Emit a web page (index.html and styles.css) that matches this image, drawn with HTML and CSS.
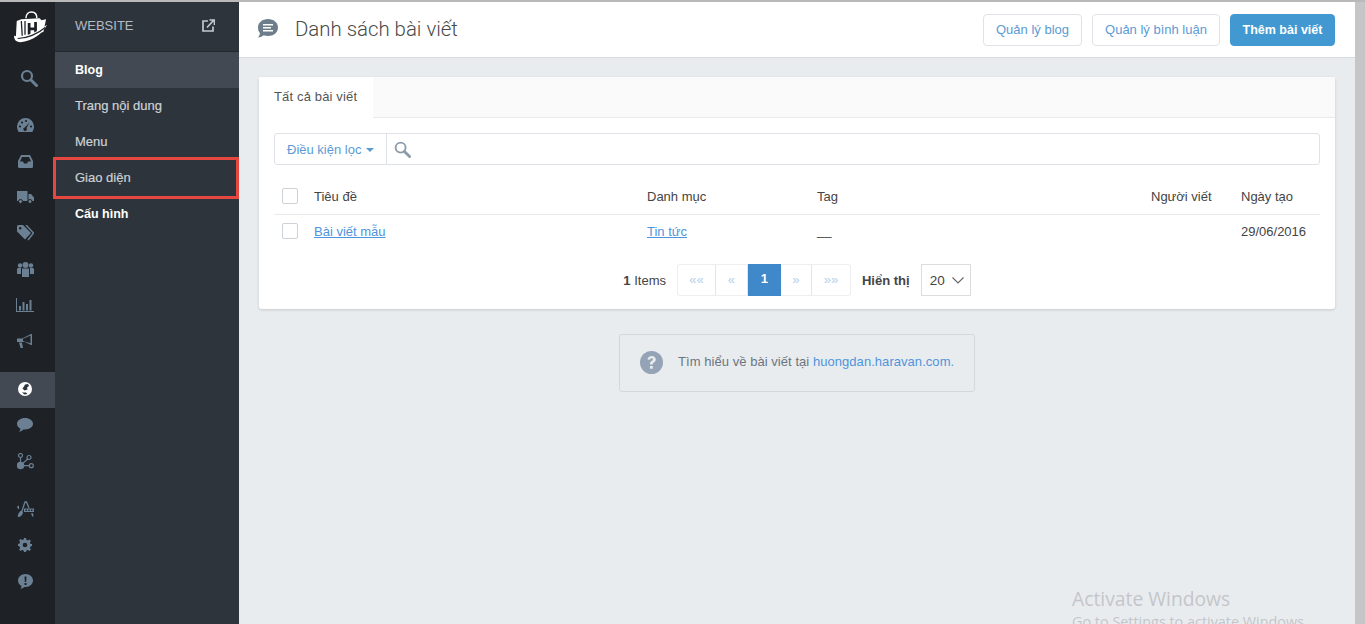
FILE: index.html
```html
<!DOCTYPE html>
<html>

<head>
  <meta charset="UTF-8">
  <title>Danh sách bài viết</title>
  <link rel="stylesheet" href="styles.css">
</head>

<body>
  <div class="page">

    <!-- icon rail -->
    <nav class="rail">
      <div class="rail-logo">
        <svg width="35" height="33" viewBox="0 0 38 36">
          <path d="M14 8C14 3 17 1 20 1s6 2 6 7" fill="none" stroke="#fff" stroke-width="1.6"/>
          <path d="M4 11l5-2 20-1 2 2 5-1-3 14-26 6-4 0z" fill="#fff"/>
          <path d="M9 11l1 16M13 11v15" stroke="#1e2126" stroke-width="1.4"/>
          <path d="M16 13h3v5h4v-6h3v14h-3v-5h-4v6h-3z" fill="#1e2126"/>
          <path d="M1 27c8 3 24-3 36-12-4 9-16 18-29 19-4 0-7-2-7-7z" fill="#fff"/>
          <path d="M5 30c10 0 22-5 30-12" fill="none" stroke="#1e2126" stroke-width="1.3"/>
        </svg>
      </div>

      <div class="rail-group">
        <a class="rail-item">
          <svg class="ic-search" width="18" height="18" viewBox="0 0 18 18"><circle cx="7" cy="7" r="5" fill="none" stroke="currentColor" stroke-width="2.2"/><path d="M11 11l5.5 5.5" stroke="currentColor" stroke-width="3" stroke-linecap="round"/></svg>
        </a>
      </div>

      <div class="rail-group">
        <a class="rail-item">
          <svg width="17" height="14" viewBox="0 0 17 14"><path d="M8.5 0A8.5 8.5 0 0 0 0 8.5c0 2 .6 3.8 1.700 5.500h13.600c1.100-1.700 1.700-3.500 1.700-5.500A8.500 8.500 0 0 0 8.500 0z" fill="currentColor"/><g fill="#1e2126"><circle cx="3" cy="8.500" r="1.100"/><circle cx="5" cy="4.500" r="1.100"/><circle cx="9" cy="3" r="1.100"/><circle cx="14" cy="8.500" r="1.100"/><path d="M12.500 4.500l-3 5.500a1.800 1.800 0 1 1-1.800-.6z"/></g></svg>
        </a>
        <a class="rail-item">
          <svg width="15" height="13" viewBox="0 0 15 13"><path d="M3 0h9l3 6v5.500a1.500 1.500 0 0 1-1.500 1.500h-12A1.500 1.500 0 0 1 0 11.500V6z" fill="currentColor"/><path d="M4 2h7l2 4.500h-3L9 8.500H6l-1-2H2z" fill="#1e2126"/></svg>
        </a>
        <a class="rail-item">
          <svg width="17" height="13" viewBox="0 0 17 13"><path d="M0 0h10.500v10H0zM11.500 3h2.500l3 3.500V10h-5.500z" fill="currentColor"/><circle cx="3.500" cy="10.500" r="2" fill="currentColor" stroke="#1e2126"/><circle cx="13" cy="10.500" r="2" fill="currentColor" stroke="#1e2126"/></svg>
        </a>
        <a class="rail-item">
          <svg width="17" height="16" viewBox="0 0 17 16"><path d="M0 1.500A1.500 1.500 0 0 1 1.500 0H6l8 8-6 6.500-8-8z" fill="currentColor"/><circle cx="3.200" cy="3.200" r="1.200" fill="#1e2126"/><path d="M9 0l7.500 8-5.500 7" fill="none" stroke="currentColor" stroke-width="1.500"/></svg>
        </a>
        <a class="rail-item">
          <svg width="17" height="15" viewBox="0 0 17 15" fill="currentColor"><circle cx="3" cy="3.500" r="2.200"/><circle cx="14" cy="3.500" r="2.200"/><circle cx="8.500" cy="3" r="3"/><path d="M0 7a1.500 1.500 0 0 1 1.500-1h2.500v6H0zM13 6h2.500A1.500 1.500 0 0 1 17 7v5h-4zM5 6.500h7V15H5z"/></svg>
        </a>
        <a class="rail-item">
          <svg width="18" height="14" viewBox="0 0 18 14" fill="currentColor"><path d="M0 0h1v13h17v1H0z"/><path d="M3 8h2v4.500H3zM6.500 4h2v8.500h-2zM10 6h2v6.500h-2zM13.500 2h2v10.500h-2z"/></svg>
        </a>
        <a class="rail-item">
          <svg width="16" height="14" viewBox="0 0 16 14" fill="currentColor"><path d="M0 4.500h5l9-4.500h1v11h-1L7 7.500v.5H0z"/><path d="M2 8.500h3l1 5.500H3.500z"/><path d="M6 4.800l7.500-3.300v7.800L6 7z" fill="#1e2126"/></svg>
        </a>
      </div>

      <div class="rail-group">
        <a class="rail-item rail-active">
          <svg width="14" height="14" viewBox="0 0 14 14"><circle cx="7" cy="7" r="7" fill="#fff"/><path d="M7 2.500l3-.5 1 2-2 1.500.5 2-3 1L4.500 6.500 6 4.500zM4 10.500h4l1.500 1.500-3 .5z" fill="#2e343b"/></svg>
        </a>
        <a class="rail-item">
          <svg width="16" height="14" viewBox="0 0 16 14"><path d="M8 0c4.400 0 8 2.500 8 5.700s-3.600 5.700-8 5.700h-1.500c-1.200 1-2.700 2-4.500 2.600.8-1 1.300-2 1.400-3.300C1.400 9.700 0 7.900 0 5.700 0 2.500 3.600 0 8 0z" fill="currentColor"/></svg>
        </a>
        <a class="rail-item">
          <svg width="17" height="17" viewBox="0 0 17 17" fill="none" stroke="currentColor" stroke-width="1.200"><circle cx="3.500" cy="2.500" r="2"/><circle cx="12" cy="4.500" r="2"/><circle cx="14.300" cy="12.700" r="2"/><circle cx="3.500" cy="12.500" r="3.200" fill="currentColor"/><path d="M3.500 4.500v5M5.500 10.500l5.300-4.500M6.500 12.600h5.800"/></svg>
        </a>
      </div>

      <div class="rail-group">
        <a class="rail-item">
          <svg width="17" height="16" viewBox="0 0 17 16"><path d="M5 10L8 1h1.500l2.500 6" fill="none" stroke="currentColor" stroke-width="1.300"/><path d="M0 5.500l2-1v3.500H1zM.8 16c0-3.200 1.400-5.500 3.600-6.500l1.600 1.200C6 13.800 3.600 16 .8 16z" fill="currentColor"/><path d="M7 7.500h10V11H7z" fill="currentColor"/><path d="M8.500 8.500H10V10H8.500zM11.300 8.500h1.500V10h-1.500zM14 8.500h1.500V10H14z" fill="#1e2126"/><path d="M14 12.500l1.800-.5.9 3-1.300.7z" fill="currentColor"/></svg>
        </a>
        <a class="rail-item">
          <svg width="14" height="14" viewBox="0 0 14 14"><path d="M6 0h2l.4 1.800 1.500.6 1.600-1 1.400 1.400-1 1.600.6 1.500L14 6v2l-1.500.4-.6 1.500 1 1.600-1.400 1.400-1.600-1-1.500.6L8 14H6l-.4-1.500-1.500-.6-1.600 1-1.400-1.400 1-1.600-.6-1.500L0 8V6l1.500-.4.6-1.500-1-1.600 1.400-1.400 1.600 1 1.500-.6z" fill="currentColor"/><circle cx="7" cy="7" r="2.300" fill="#1e2126"/></svg>
        </a>
        <a class="rail-item">
          <svg width="15" height="15" viewBox="0 0 15 15"><path d="M7.500 0C11.600 0 15 2.900 15 6.500S11.600 13 7.500 13h-1c-1.300 1-2.700 1.700-4 2 .6-.9 1-1.900 1-3C1.400 10.800 0 8.800 0 6.500 0 2.900 3.400 0 7.500 0z" fill="currentColor"/><path d="M6.500 2.500h2L8.200 8H6.800zM6.500 9h2v2h-2z" fill="#1e2126"/></svg>
        </a>
      </div>
    </nav>

    <!-- website menu -->
    <aside class="side">
      <div class="side-head">
        <span>WEBSITE</span>
        <svg width="13" height="13" viewBox="0 0 13 13" fill="none" stroke="#c4c9ce" stroke-width="1.700"><path d="M6 2H1v10h10V7.500"/><path d="M5 8.500L11.500 1.500M7.500 1h5v5"/></svg>
      </div>
      <a class="side-item side-active">Blog</a>
      <a class="side-item">Trang nội dung</a>
      <a class="side-item">Menu</a>
      <a class="side-item">Giao diện</a>
      <a class="side-item side-strong">Cấu hình</a>
      <div class="mark"></div>
    </aside>

    <main class="main">
      <header class="topbar">
        <div class="title">
          <svg width="20" height="19" viewBox="0 0 20 19"><path d="M10 0c5.500 0 10 3.500 10 8.500S15.500 17 10 17c-1.500 0-3-.3-4.300-.7C4.500 17.300 2.500 18.500 0 18.500c1-1 1.800-2.500 2-4.200C.7 12.900 0 10.800 0 8.500 0 3.500 4.500 0 10 0z" fill="#6d7d8c"/><path d="M5 5h10v1.500H5zM5 8h8v1.500H5zM5 11h10v1.500H5z" fill="#fff"/></svg>
          <h1>Danh sách bài viết</h1>
        </div>
        <div class="actions">
          <a class="btn btn-blog">Quản lý blog</a>
          <a class="btn btn-cmt">Quản lý bình luận</a>
          <a class="btn btn-add">Thêm bài viết</a>
        </div>
      </header>

      <div class="content">
        <section class="card">
          <div class="tabs">
            <div class="tab">Tất cả bài viết</div>
          </div>

          <div class="card-body">
            <div class="filter">
              <a class="filter-btn">Điều kiện lọc <span class="caret"></span></a>
              <div class="filter-search">
                <svg width="17" height="17" viewBox="0 0 18 18"><circle cx="7" cy="7" r="5.300" fill="none" stroke="#8c9bab" stroke-width="2"/><path d="M11 11l5.500 5.500" stroke="#8c9bab" stroke-width="3" stroke-linecap="round"/></svg>
              </div>
            </div>

            <div class="row row-head">
              <span class="cell-check"><span class="check"></span></span>
              <span>Tiêu đề</span>
              <span>Danh mục</span>
              <span>Tag</span>
              <span>Người viết</span>
              <span>Ngày tạo</span>
            </div>
            <div class="row">
              <span class="cell-check"><span class="check"></span></span>
              <span><a class="link">Bài viết mẫu</a></span>
              <span><a class="link">Tin tức</a></span>
              <span class="dash">__</span>
              <span></span>
              <span>29/06/2016</span>
            </div>

            <div class="pager">
              <span class="count"><b>1</b> Items</span>
              <div class="pages">
                <a class="pg pg-wide">««</a>
                <a class="pg">«</a>
                <a class="pg pg-on">1</a>
                <a class="pg pg-next">»</a>
                <a class="pg pg-wide">»»</a>
              </div>
              <span class="show">Hiển thị</span>
              <div class="select">20
                <svg width="12" height="7" viewBox="0 0 12 7" fill="none" stroke="#666" stroke-width="1.100"><path d="M.5.500L6 6l5.500-5.500"/></svg>
              </div>
            </div>
          </div>
        </section>

        <div class="note">
          <svg width="23" height="23" viewBox="0 0 23 23"><circle cx="11.500" cy="11.500" r="11.500" fill="#94a3b5"/><path d="M7.500 8.500c.3-2.300 2-3.500 4.200-3.500 2.400 0 4.100 1.400 4.100 3.400 0 1.500-.8 2.300-1.900 3-.9.600-1.200 1-1.200 2H10c0-1.800.6-2.600 1.700-3.300.8-.5 1.200-.9 1.200-1.600 0-.8-.5-1.300-1.300-1.300-.9 0-1.400.5-1.500 1.500zM10 15h2.800v2.800H10z" fill="#e9ecef"/></svg>
          <span>Tìm hiểu về bài viết tại <a class="note-link">huongdan.haravan.com.</a></span>
        </div>
      </div>

      <div class="watermark">
        <div class="wm-big">Activate Windows</div>
        <div class="wm-small">Go to Settings to activate Windows.</div>
      </div>
    </main>

    <div class="scrollbar"></div>
  </div>
</body>

</html>
```

FILE: styles.css
```css
html, body {
  margin: 0;
  height: 100%;
  overflow: hidden;
}

body {
  font-family: "Liberation Sans", Arial, sans-serif;
  font-size: 13px;
  color: #444;
}

a {
  text-decoration: none;
}

.page {
  display: flex;
  height: 100vh;
  box-sizing: border-box;
  border-top: 2px solid #b9b9b9;
}

/* icon rail */
.rail {
  width: 55px;
  flex: none;
  background: #1e2126;
  color: #6c8094;
}

.rail-logo {
  height: 58px;
  display: flex;
  align-items: center;
  justify-content: center;
  padding: 0 0 8px 6px;
  box-sizing: border-box;
}

.rail-group {
  margin-bottom: 12px;
}

.rail-item {
  height: 36px;
  box-sizing: border-box;
  padding: 0 5px 2px 0;
  display: flex;
  align-items: center;
  justify-content: center;
}

.rail-active {
  background: #424953;
}

.ic-search {
  margin: 2px 0 0 8px;
}

/* website menu */
.side {
  position: relative;
  width: 184px;
  flex: none;
  background: #2e343b;
}

.side-head {
  height: 50px;
  box-sizing: border-box;
  border-bottom: 1px solid #23282d;
  padding: 0 24px 3px 20px;
  display: flex;
  align-items: center;
  justify-content: space-between;
  color: #b5bbc2;
  font-size: 13px;
}

.side-item {
  display: block;
  height: 36px;
  line-height: 36px;
  padding-left: 20px;
  color: #ccd1d6;
  font-size: 13px;
  -webkit-text-stroke: 0.2px;
}

.side-active {
  background: #424953;
  color: #fff;
  font-size: 12.5px;
  font-weight: bold;
  -webkit-text-stroke: 0;
}

.side-strong {
  color: #fff;
  font-size: 12.5px;
  font-weight: bold;
  -webkit-text-stroke: 0;
}

/* red box drawn over the screenshot */
.mark {
  position: absolute;
  left: -2px;
  top: 155px;
  width: 186px;
  height: 42px;
  box-sizing: border-box;
  border: 3px solid #e8473f;
}

/* main */
.main {
  position: relative;
  flex: 1;
  min-width: 0;
  background: #e9ecef;
}

.topbar {
  height: 56px;
  box-sizing: border-box;
  background: #fff;
  border-bottom: 1px solid #d9dcdf;
  padding: 0 20px 0 19px;
  display: flex;
  align-items: center;
  justify-content: space-between;
}

.title {
  display: flex;
  align-items: center;
  gap: 17px;
  padding-bottom: 2px;
}

.title h1 {
  margin: 0;
  font-family: Roboto, sans-serif;
  font-size: 20.4px;
  font-weight: 300;
  color: #4a4a4a;
}

.actions {
  display: flex;
  gap: 10px;
}

.btn {
  height: 32px;
  line-height: 30px;
  box-sizing: border-box;
  border: 1px solid #dfe3e7;
  border-radius: 4px;
  background: #fff;
  color: #5b9bd5;
  text-align: center;
  font-size: 13px;
}

.btn-blog {
  width: 99px;
}

.btn-cmt {
  width: 128px;
}

.btn-add {
  width: 105px;
  background: #4299d1;
  border-color: #4299d1;
  color: #fff;
  font-size: 12.5px;
  font-weight: bold;
}

.content {
  padding: 19px 20px 0;
}

.card {
  background: #fff;
  border-radius: 3px;
  box-shadow: 0 1px 3px rgba(0, 0, 0, 0.15);
}

.tabs {
  height: 41px;
  box-sizing: border-box;
  background: #fafafa;
  border-bottom: 1px solid #eaeaea;
}

.tab {
  width: 114px;
  height: 41px;
  box-sizing: border-box;
  padding-left: 15px;
  line-height: 40px;
  background: #fff;
  color: #555;
  font-size: 13px;
  letter-spacing: 0.15px;
}

.card-body {
  padding: 15px 15px 13px;
}

.filter {
  display: flex;
  height: 32px;
  box-sizing: border-box;
  border: 1px solid #dfe3e7;
  border-radius: 3px;
}

.filter-btn {
  width: 112px;
  box-sizing: border-box;
  border-right: 1px solid #dfe3e7;
  padding-left: 12px;
  line-height: 31px;
  color: #5b9bd5;
}

.caret {
  display: inline-block;
  margin-left: 1px;
  vertical-align: 2px;
  border: 4px solid transparent;
  border-top-color: #5b9bd5;
  border-bottom: 0;
}

.filter-search {
  display: flex;
  align-items: center;
  padding-left: 7px;
}

.row {
  display: grid;
  grid-template-columns: 40px 333px 170px 334px 90px 1fr;
  align-items: center;
  height: 32px;
  color: #444;
}

.row-head {
  height: 36px;
  margin-top: 13px;
  border-bottom: 1px solid #eaeaea;
}

.cell-check {
  display: flex;
  padding-left: 8px;
}

.check {
  width: 16px;
  height: 16px;
  box-sizing: border-box;
  border: 1px solid #ccd2d8;
  border-radius: 2px;
  background: #fff;
}

.link {
  color: #4f94dc;
  text-decoration: underline;
}

.dash {
  padding-bottom: 2px;
}

.pager {
  display: flex;
  align-items: center;
  justify-content: center;
  height: 32px;
  margin-top: 17px;
}

.count {
  margin-right: 11px;
}

.pages {
  display: flex;
  height: 32px;
  box-sizing: border-box;
  border: 1px solid #eceef0;
  border-radius: 3px;
}

.pg {
  width: 31px;
  line-height: 30px;
  text-align: center;
  color: #b4d0ec;
  border-right: 1px solid #e3e6e9;
  font-size: 13px;
}

.pg:last-child {
  border-right: 0;
}

.pg-wide {
  width: 38px;
}

.pg-wide:first-child {
  width: 37px;
}

.pg-next {
  width: 30px;
}

.pg-on {
  height: 32px;
  margin-top: -1px;
  width: 33px;
  background: #3f88c9;
  color: #fff;
  font-weight: bold;
  border-right: 0;
}

.show {
  margin: 0 11px;
  font-weight: bold;
  color: #444;
}

.select {
  width: 50px;
  height: 32px;
  box-sizing: border-box;
  border: 1px solid #dcdcdc;
  padding: 0 6px 0 8px;
  display: flex;
  align-items: center;
  justify-content: space-between;
  font-size: 13.500px;
}

.note {
  width: 356px;
  height: 58px;
  box-sizing: border-box;
  margin: 25px auto 0;
  border: 1px solid #d3d8de;
  border-radius: 3px;
  padding-left: 20px;
  display: flex;
  align-items: center;
  gap: 15px;
  color: #6b7580;
  letter-spacing: 0.05px;
}

.note span {
  padding-bottom: 3px;
}

.note svg {
  margin-top: -1px;
}

.note-link {
  color: #4f94dc;
}

/* windows watermark */
.watermark {
  position: absolute;
  left: 833px;
  top: 584px;
  color: #c3c6c9;
  white-space: nowrap;
}

.wm-big {
  font-family: "Open Sans", sans-serif;
  font-size: 19.300px;
  line-height: 26px;
}

.wm-small {
  font-family: "Open Sans", sans-serif;
  font-size: 14.400px;
  line-height: 19px;
}

.scrollbar {
  width: 10px;
  flex: none;
  background: #c6c6c6;
}
```
